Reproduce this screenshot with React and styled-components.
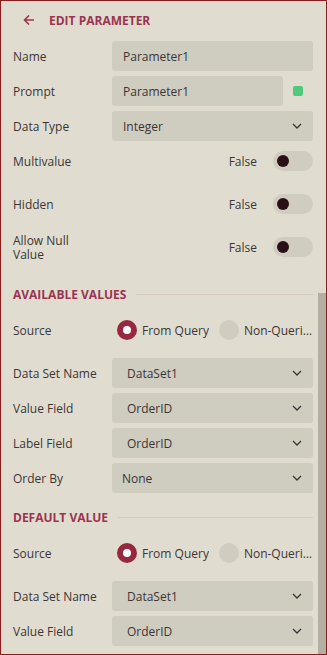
import React from 'react';
import styled, { createGlobalStyle } from 'styled-components';

const Global = createGlobalStyle`
  html, body { margin: 0; padding: 0; background: #e0ddd0; }
  body { font-family: "Open Sans", "Noto Sans", sans-serif; }
  * { box-sizing: border-box; }
`;

const Panel = styled.div`
  position: relative;
  width: 327px;
  height: 655px;
  border: 1px solid #8c1c1c;
  background: #e0ddd0;
  overflow: hidden;
  padding: 0 13px 0 12px;
  font-family: "Open Sans", "Noto Sans", sans-serif;
  font-size: 12px;
  color: #3d3535;
  display: flex;
  flex-direction: column;
`;

const Scrollbar = styled.div`
  position: absolute;
  right: 0;
  top: 292px;
  width: 8px;
  height: 362px;
  background: #b3afa3;
`;

const Header = styled.div`
  height: 38px;
  display: flex;
  align-items: center;
  padding-left: 10px;
  gap: 15px;
`;

const Title = styled.div`
  font-weight: 700;
  font-size: 12px;
  color: #9c3450;
  text-transform: uppercase;
  white-space: nowrap;
`;

const Field = styled.div`
  display: grid;
  grid-template-columns: 99px 1fr;
  align-items: center;
  min-height: 30px;
  margin-top: ${(p) => (p.$mt ?? 5)}px;
`;

const Label = styled.div`
  line-height: ${(p) => (p.$lh ? `${p.$lh}px` : 'normal')};
  max-width: ${(p) => (p.$max ? `${p.$max}px` : 'none')};
  padding-top: 1px;
`;

const Box = styled.div`
  height: 30px;
  background: #cfccc0;
  border-radius: 3px;
  display: flex;
  align-items: center;
  justify-content: space-between;
  padding-left: ${(p) => p.$pl ?? 11}px;
  padding-right: 11px;
`;

const PromptWrap = styled.div`
  display: flex;
  align-items: center;
`;

const PromptBox = styled(Box)`
  width: 171px;
`;

const Swatch = styled.div`
  width: 10px;
  height: 10px;
  border-radius: 2px;
  background: #4dcb7a;
  margin-left: 10px;
`;

const ToggleGroup = styled.div`
  display: flex;
  justify-content: flex-end;
  align-items: center;
  gap: 16px;
`;

const Track = styled.div`
  position: relative;
  width: 40px;
  height: 20px;
  border-radius: 10px;
  background: #d0cdc0;
`;

const Knob = styled.div`
  position: absolute;
  left: 4px;
  top: 4px;
  width: 12px;
  height: 12px;
  border-radius: 50%;
  background: #2a1016;
`;

const Section = styled.div`
  display: flex;
  align-items: center;
  height: 16px;
  margin-top: ${(p) => p.$mt}px;
`;

const Rule = styled.div`
  flex: 1;
  height: 1px;
  background: #d6c9bf;
  margin-left: 10px;
`;

const RadioGroup = styled.div`
  display: flex;
  align-items: center;
  padding-left: 5px;
  min-width: 0;
`;

const RadioItem = styled.div`
  display: flex;
  align-items: center;
  gap: 5px;
  min-width: 0;
  flex: ${(p) => (p.$grow ? 1 : 'none')};
  margin-right: ${(p) => (p.$grow ? 0 : 10)}px;
`;

const Dot = styled.div`
  flex: none;
  width: 20px;
  height: 20px;
  border-radius: 50%;
  background: ${(p) => (p.$on ? '#98283f' : '#d0cdc0')};
  display: flex;
  align-items: center;
  justify-content: center;
  &::after {
    content: '';
    display: ${(p) => (p.$on ? 'block' : 'none')};
    width: 8px;
    height: 8px;
    border-radius: 50%;
    background: #ffffff;
  }
`;

const RadioText = styled.span`
  white-space: nowrap;
  overflow: hidden;
  text-overflow: ellipsis;
`;

const Chevron = () => (
  <svg width="10" height="6" viewBox="0 0 10 6">
    <path d="M1 1 L5 5 L9 1" fill="none" stroke="#3d3535" strokeWidth="1.3" />
  </svg>
);

const BackArrow = () => (
  <svg width="11" height="10" viewBox="0 0 11 10">
    <path d="M10.5 5 H1.5 M5.5 1 L1.5 5 L5.5 9" fill="none" stroke="#9c3450" strokeWidth="1.7" strokeLinecap="round" strokeLinejoin="round" />
  </svg>
);

const Select = ({ value, pl = 15 }) => (
  <Box $pl={pl}>
    <span>{value}</span>
    <Chevron />
  </Box>
);

const Toggle = () => (
  <ToggleGroup>
    <span>False</span>
    <Track>
      <Knob />
    </Track>
  </ToggleGroup>
);

const Radios = () => (
  <RadioGroup>
    <RadioItem>
      <Dot $on />
      <RadioText>From Query</RadioText>
    </RadioItem>
    <RadioItem $grow>
      <Dot />
      <RadioText>Non-Queried</RadioText>
    </RadioItem>
  </RadioGroup>
);

export default function App() {
  return (
    <>
      <Global />
      <Panel>
        <Header>
          <BackArrow />
          <Title>Edit Parameter</Title>
        </Header>

        <Field $mt={2}>
          <Label>Name</Label>
          <Box>Parameter1</Box>
        </Field>
        <Field>
          <Label>Prompt</Label>
          <PromptWrap>
            <PromptBox>Parameter1</PromptBox>
            <Swatch />
          </PromptWrap>
        </Field>
        <Field>
          <Label>Data Type</Label>
          <Select value="Integer" pl={11} />
        </Field>

        <Field $mt={5}>
          <Label>Multivalue</Label>
          <Toggle />
        </Field>
        <Field $mt={13}>
          <Label>Hidden</Label>
          <Toggle />
        </Field>
        <Field $mt={13}>
          <Label $lh={14} $max={80}>Allow Null Value</Label>
          <Toggle />
        </Field>

        <Section $mt={24}>
          <Title>Available Values</Title>
          <Rule />
        </Section>
        <Field $mt={13}>
          <Label>Source</Label>
          <Radios />
        </Field>
        <Field $mt={13}>
          <Label>Data Set Name</Label>
          <Select value="DataSet1" />
        </Field>
        <Field>
          <Label>Value Field</Label>
          <Select value="OrderID" />
        </Field>
        <Field>
          <Label>Label Field</Label>
          <Select value="OrderID" />
        </Field>
        <Field>
          <Label>Order By</Label>
          <Select value="None" pl={10} />
        </Field>

        <Section $mt={16}>
          <Title>Default Value</Title>
          <Rule />
        </Section>
        <Field $mt={13}>
          <Label>Source</Label>
          <Radios />
        </Field>
        <Field $mt={13}>
          <Label>Data Set Name</Label>
          <Select value="DataSet1" />
        </Field>
        <Field>
          <Label>Value Field</Label>
          <Select value="OrderID" />
        </Field>

        <Scrollbar />
      </Panel>
    </>
  );
}
